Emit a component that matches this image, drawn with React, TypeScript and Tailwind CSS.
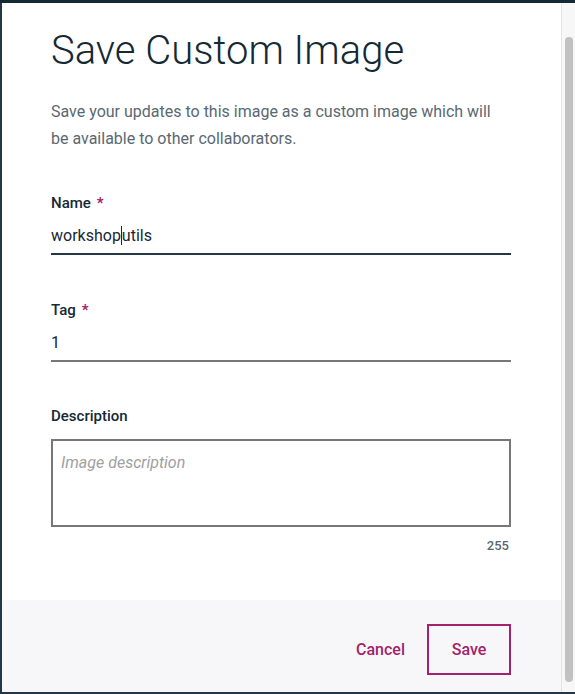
import React from "react";

const FONT = { fontFamily: "Roboto, 'Noto Sans', sans-serif" };

function Field({ label, required, value, focused }: { label: string; required?: boolean; value: string; focused?: boolean }) {
  return (
    <div className="flex flex-col">
      <div className="flex items-center text-[15px] font-medium text-[#152935] h-[20px]">
        {label}
        {required && <span className="ml-[6px] text-[#a2236c] text-[15px] font-bold">*</span>}
      </div>
      <div className="mt-[12px] h-[21px] flex items-center text-[16px] text-[#152935]">
        {focused ? (
          <>
            <span>workshop</span>
            <span className="inline-block w-px h-[19px] bg-[#152935]" />
            <span>utils</span>
          </>
        ) : (
          value
        )}
      </div>
      <div className={focused ? "mt-[7px] h-[2px] bg-[#253746]" : "mt-[7px] h-[2px] bg-[#777777]"} />
    </div>
  );
}

export default function App() {
  return (
    <div className="w-[575px] h-[694px] flex flex-col bg-white overflow-hidden" style={FONT}>
      {/* top edge */}
      <div className="h-[3px] bg-[#152935]" />
      <div className="flex-1 flex min-h-0">
        <div className="w-[2px] bg-[#253746]" />
        <div className="flex-1 flex flex-col">
          {/* Body */}
          <div className="flex-1 pl-[49px] pr-[50px] pt-[24px]">
            <h1 className="text-[40px] font-light leading-[48px] text-[#152935]">Save Custom Image</h1>
            <p className="mt-[23px] text-[16px] leading-[27px] text-[#5a6872]">
              Save your updates to this image as a custom image which will be available to other collaborators.
            </p>
            <div className="mt-[41px]">
              <Field label="Name" required value="workshoputils" focused />
            </div>
            <div className="mt-[45px]">
              <Field label="Tag" required value="1" />
            </div>
            <div className="mt-[44px] flex flex-col">
              <div className="text-[15px] font-medium text-[#152935] h-[20px] flex items-center">Description</div>
              <div className="mt-[13px] h-[88px] border-2 border-[#777777] px-[8px] pt-[10px]">
                <span className="text-[16px] italic text-[#a0a0a0]">Image description</span>
              </div>
              <div className="mt-[9px] self-end text-[13px] font-medium text-[#5a6872] pr-[2px]">255</div>
            </div>
          </div>
          {/* Footer */}
          <div className="h-[92px] bg-[#f7f7f9] flex items-start justify-end pr-[50px] pt-[24px] gap-[22px]">
            <button type="button" className="h-[51px] text-[16px] font-medium text-[#a2236c] px-0">
              Cancel
            </button>
            <button
              type="button"
              className="w-[84px] h-[51px] border-2 border-[#a2236c] text-[16px] font-medium text-[#a2236c]"
            >
              Save
            </button>
          </div>
        </div>
        {/* Scrollbar */}
        <div className="w-[14px] border-l border-[#e4e4e4] bg-[#f7f7f7] pt-[34px] pb-[10px] pl-[3px] pr-[2px]">
          <div className="h-full w-[8px] rounded-full bg-[#c1c1c1]" />
        </div>
      </div>
      <div className="h-[2px] bg-[#253746]" />
    </div>
  );
}
